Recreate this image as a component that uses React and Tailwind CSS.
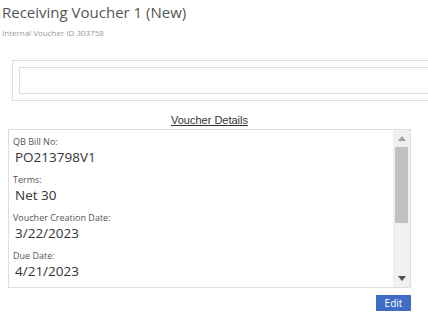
import React from 'react';

const fields = [
  { label: 'QB Bill No:', value: 'PO213798V1' },
  { label: 'Terms:', value: 'Net 30' },
  { label: 'Voucher Creation Date:', value: '3/22/2023' },
  { label: 'Due Date:', value: '4/21/2023' },
];

const App = () => {
  return (
    <div className="w-[428px] h-[317px] overflow-hidden bg-white font-['Open_Sans',sans-serif]">
      <div className="pl-[2px] pt-[1px]">
        <h1 className="text-[15px] leading-[22px] text-[#555]">Receiving Voucher 1 (New)</h1>
        <div className="text-[8px] leading-[12px] text-[#999] mt-[4px]">Internal Voucher ID 303758</div>
      </div>

      <div className="ml-[12px] mt-[21px] w-[440px] h-[41px] border border-[#ddd] pt-[6px] pl-[6px]">
        <div className="h-[27px] border border-[#ddd]"></div>
      </div>

      <div className="mt-[12px] h-[14px] text-center pl-[8px] pr-[17px] font-['Liberation_Sans',Arial,sans-serif] text-[11px] leading-[14px] text-[#333]">
        <span className="underline">Voucher Details</span>
      </div>

      <div className="mt-[2px] ml-[8px] w-[403px] h-[159px] border border-[#ddd] flex">
        <div className="flex-1 pl-[4px] pt-[5px]">
          {fields.map((f) => (
            <div key={f.label} className="mb-[7px]">
              <div className="text-[9px] leading-[13px] text-[#555]">{f.label}</div>
              <div className="text-[13.5px] leading-[18px] text-[#333] pl-[2px]">{f.value}</div>
            </div>
          ))}
        </div>
        <div className="w-[17px] bg-[#f0f0f0] flex flex-col items-center">
          <div className="h-[17px] flex items-center justify-center">
            <svg width="8" height="5" viewBox="0 0 8 5"><path d="M0 5 L4 0 L8 5 Z" fill="#a3a3a3" /></svg>
          </div>
          <div className="w-[13px] h-[76px] bg-[#c1c1c1]"></div>
          <div className="flex-1"></div>
          <div className="h-[17px] flex items-center justify-center">
            <svg width="8" height="5" viewBox="0 0 8 5"><path d="M0 0 L8 0 L4 5 Z" fill="#505050" /></svg>
          </div>
        </div>
      </div>

      <div className="flex justify-end pr-[17px] mt-[7px]">
        <button className="w-[35px] h-[16px] bg-[#3f6cc4] text-white text-[10px] leading-[16px]">Edit</button>
      </div>
    </div>
  );
};

export default App;
